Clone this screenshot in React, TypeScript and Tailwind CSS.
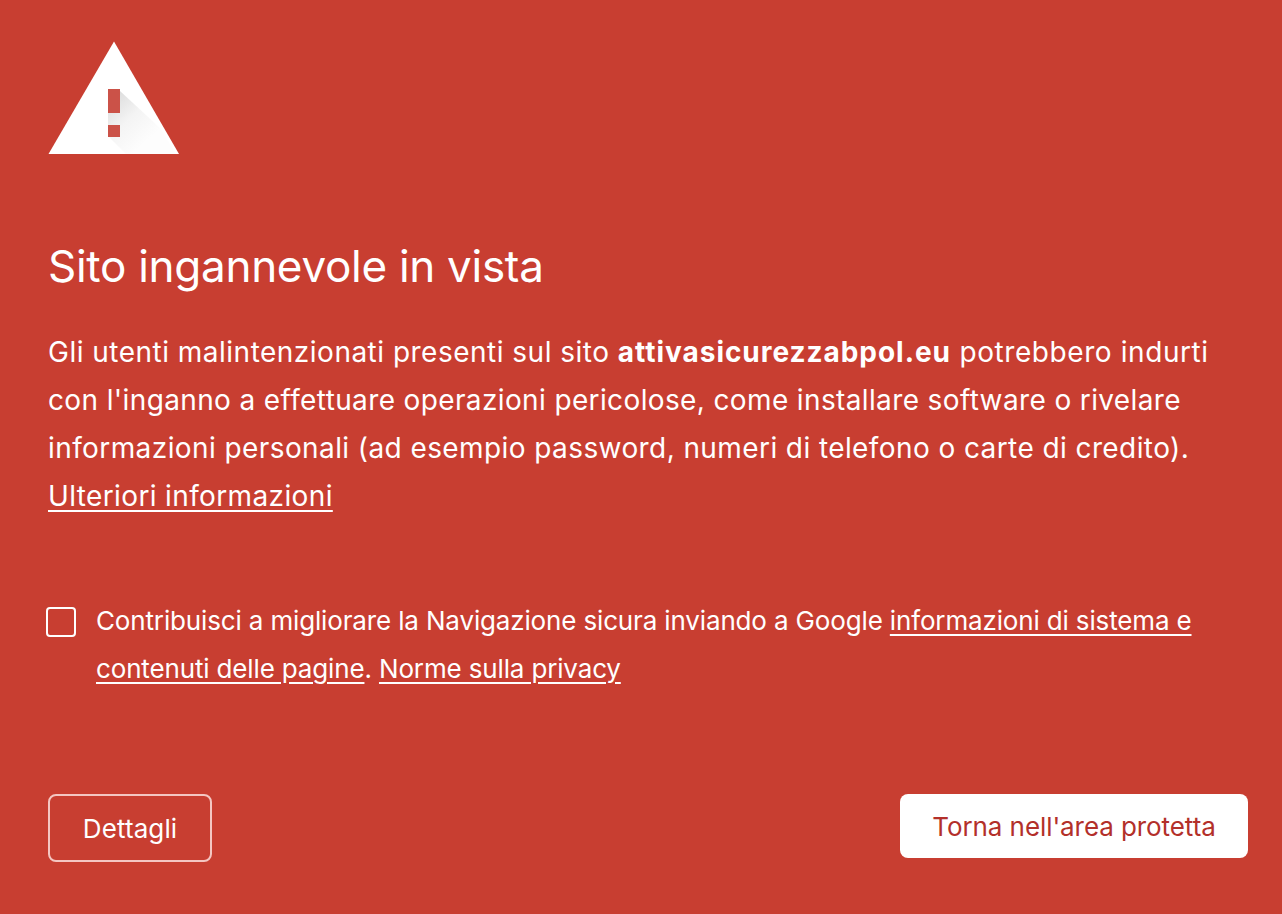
export default function App() {
  return (
    <div className="min-h-[914px] bg-[#c83e31] text-white pl-12 pr-[34px] pt-10 overflow-hidden" style={{ fontFamily: '"Inter", "Liberation Sans", sans-serif' }}>
      <svg width="132" height="114" viewBox="0 0 132 114" className="block">
        <defs>
          <linearGradient id="s" gradientUnits="userSpaceOnUse" x1="62" y1="58" x2="100" y2="100">
            <stop offset="0" stopColor="#dcdcdc" />
            <stop offset="0.5" stopColor="#f4f4f4" />
            <stop offset="1" stopColor="#fdfdfd" />
          </linearGradient>
        </defs>
        <path d="M66 1.5 L131 114 H0.5 Z" fill="#ffffff" />
        <path d="M72 51 L112 88 L128 114 H78 L60 96 V60 Z" fill="url(#s)" />
        <rect x="60" y="49" width="12" height="24" fill="#cb5248" />
        <rect x="60" y="85" width="12" height="12" fill="#cb5248" />
      </svg>
      <h1 className="mt-[82px] text-[44px] leading-[60px] font-normal tracking-[-0.28px]">Sito ingannevole in vista</h1>
      <p className="mt-[32px] text-[28px] leading-[48px] tracking-[0.37px] whitespace-nowrap">
        <span className="tracking-[0.49px]">Gli utenti malintenzionati presenti sul sito </span><b className="font-bold tracking-[0.96px]">attivasicurezzabpol.eu</b><span className="tracking-[0.58px]"> potrebbero indurti</span><br />
        con l'inganno a effettuare operazioni pericolose, come installare software o rivelare<br />
        <span className="tracking-[0.41px]">informazioni personali (ad esempio password, numeri di telefono o carte di credito).</span><br />
        <a className="underline underline-offset-[4px]">Ulteriori informazioni</a>
      </p>
      <div className="mt-[77px] flex items-start">
        <span className="mt-[10px] -ml-[2px] w-[30px] h-[30px] rounded-[4px] border-2 border-white shrink-0" />
        <p className="ml-5 text-[26px] leading-[48px] tracking-[-0.15px] whitespace-nowrap">
          Contribuisci a migliorare la Navigazione sicura inviando a Google <a className="underline underline-offset-[4px]">informazioni di sistema e</a><br />
          <a className="underline underline-offset-[4px]">contenuti delle pagine</a>. <a className="underline underline-offset-[4px]">Norme sulla privacy</a>
        </p>
      </div>
      <div className="mt-[101px] flex justify-between items-start">
        <button className="w-[164px] h-[68px] rounded-[8px] border-2 border-[#f4c6c2] text-[26px] tracking-[0.1px]">Dettagli</button>
        <button className="w-[348px] h-[64px] rounded-[8px] bg-white text-[#b3302a] text-[26px] tracking-[-0.08px]">Torna nell'area protetta</button>
      </div>
    </div>
  );
}
